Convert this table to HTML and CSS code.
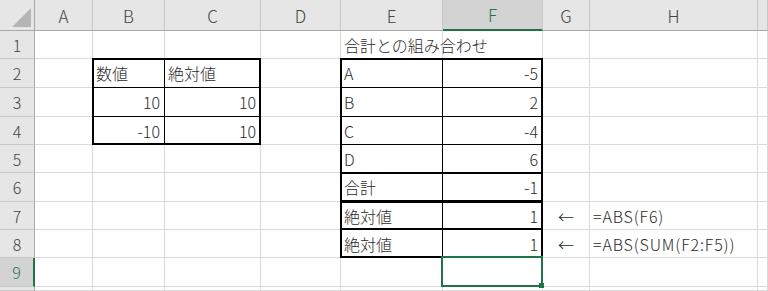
FILE: index.html
```html
<!DOCTYPE html>
<html lang="ja">
<head>
    <meta charset="UTF-8">
    <meta name="viewport" content="width=device-width, initial-scale=1.0">
    <title>合計との組み合わせ</title>
    <link rel="stylesheet" href="styles.css">
</head>
<body>
	<div class="sheet">
		<!-- column headers -->
		<div class="hd col corner"><svg width="34" height="30" viewBox="0 0 34 30"><polygon points="31,8 31,27 12,27" fill="#b5b5b5"/></svg></div>
		<div class="hd col">A</div><div class="hd col">B</div><div class="hd col">C</div><div class="hd col">D</div>
		<div class="hd col">E</div><div class="hd col on">F</div><div class="hd col">G</div><div class="hd col">H</div><div class="hd col"></div>

		<!-- 1 -->
		<div class="hd row">1</div>
		<div></div><div></div><div></div><div></div>
		<div>合計との組み合わせ</div><div></div><div></div><div></div><div></div>

		<!-- 2 -->
		<div class="hd row">2</div>
		<div></div>
		<div class="bx t2 l2">数値</div><div class="bx t2 r2">絶対値</div>
		<div></div>
		<div class="bx t2 l2 lat">A</div><div class="bx t2 r2 num">-5</div>
		<div></div><div></div><div></div>

		<!-- 3 -->
		<div class="hd row">3</div>
		<div></div>
		<div class="bx l2 num">10</div><div class="bx r2 num">10</div>
		<div></div>
		<div class="bx l2 lat">B</div><div class="bx r2 num">2</div>
		<div></div><div></div><div></div>

		<!-- 4 -->
		<div class="hd row">4</div>
		<div></div>
		<div class="bx l2 b2 num">-10</div><div class="bx r2 b2 num">10</div>
		<div></div>
		<div class="bx l2 lat">C</div><div class="bx r2 num">-4</div>
		<div></div><div></div><div></div>

		<!-- 5 -->
		<div class="hd row">5</div>
		<div></div><div></div><div></div><div></div>
		<div class="bx l2 lat">D</div><div class="bx r2 num">6</div>
		<div></div><div></div><div></div>

		<!-- 6 -->
		<div class="hd row">6</div>
		<div></div><div></div><div></div><div></div>
		<div class="bx t2 l2 b2">合計</div><div class="bx t2 r2 b2 num">-1</div>
		<div></div><div></div><div></div>

		<!-- 7 -->
		<div class="hd row">7</div>
		<div></div><div></div><div></div><div></div>
		<div class="bx t2 l2 b2">絶対値</div><div class="bx t2 r2 b2 num">1</div>
		<div class="arrow">←</div><div class="lat">=ABS(F6)</div><div></div>

		<!-- 8 -->
		<div class="hd row">8</div>
		<div></div><div></div><div></div><div></div>
		<div class="bx l2 b2">絶対値</div><div class="bx r2 b2 num">1</div>
		<div class="arrow">←</div><div class="lat">=ABS(SUM(F2:F5))</div><div></div>

		<!-- 9 -->
		<div class="hd row on">9</div>
		<div></div><div></div><div></div><div></div>
		<div></div><div class="sel"></div>
		<div></div><div></div><div></div>

		<!-- 10 -->
		<div class="hd row"></div>
		<div></div><div></div><div></div><div></div>
		<div></div><div></div><div></div><div></div><div></div>
	</div>
</body>
</html>
```

FILE: styles.css
```css
html, body {
	margin: 0;
	padding: 0;
}
body {
	font-family: "Noto Sans CJK JP", sans-serif;
	font-size: 16px;
	font-weight: 300;
	color: #2b2b2b;
	background: #fff;
	overflow: hidden;
}
.sheet {
	display: grid;
	grid-template-columns: 35px 58px 72px 96px 80px 102px 100px 47px 168px 1fr;
	grid-template-rows: 31px 28px 29px 29px 28px 28px 29px 28px 28px 29px 1fr;
	width: 768px;
	height: 291px;
}
.sheet > div {
	box-sizing: border-box;
	position: relative;
	display: flex;
	align-items: center;
	min-width: 0;
	padding: 0 4px 0 3px;
	border-right: 1px solid #dadada;
	border-bottom: 1px solid #dadada;
	white-space: nowrap;
	line-height: 1;
}

/* headers */
.sheet > .hd {
	justify-content: center;
	padding: 0;
	background: #e6e6e6;
	color: #444;
}
.sheet > .col {
	border-right-color: #c8c8c8;
	border-bottom-color: #a9a9a9;
	font-size: 17px;
}
.sheet > .row {
	border-right-color: #a9a9a9;
	border-bottom-color: #c8c8c8;
}
.sheet > .corner {
	display: block;
	border-right-color: #a9a9a9;
}
.corner svg {
	display: block;
}
.sheet > .col.on {
	background: #d3d3d3;
	color: #217346;
	border-bottom: 2px solid #217346;
}
.sheet > .row.on {
	background: #d3d3d3;
	color: #217346;
	border-right: 2px solid #217346;
}

/* cells */
.sheet > .num {
	justify-content: flex-end;
}
.sheet > .arrow {
	justify-content: center;
	padding: 0;
}
.lat {
	letter-spacing: 0.85px;
}

/* cell borders drawn on the gridlines */
.bx::after {
	content: "";
	position: absolute;
	top: -1px;
	left: -1px;
	right: -1px;
	bottom: -1px;
	border-style: solid;
	border-color: #000;
	border-width: var(--t, 1px) var(--r, 1px) var(--b, 1px) var(--l, 1px);
	pointer-events: none;
}
.t2 { --t: 2px; }
.r2 { --r: 2px; }
.b2 { --b: 2px; }
.l2 { --l: 2px; }

/* active cell */
.sheet > .sel {
	z-index: 2;
}
.sel::after {
	content: "";
	position: absolute;
	top: -2px;
	left: -2px;
	right: -1px;
	bottom: -1px;
	border: 2px solid #217346;
}
.sel::before {
	content: "";
	position: absolute;
	right: -2px;
	bottom: -2px;
	width: 5px;
	height: 5px;
	background: #217346;
	z-index: 1;
}
```
